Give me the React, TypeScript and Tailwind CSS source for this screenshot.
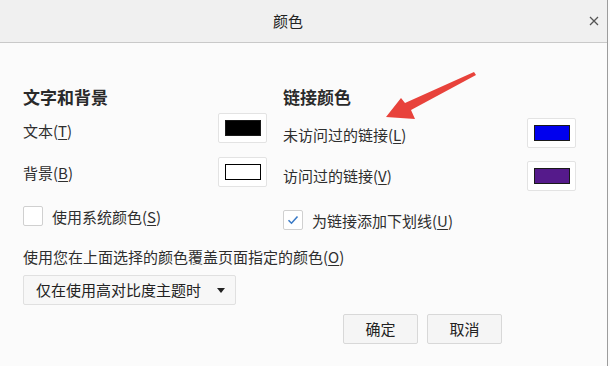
import React from 'react';

const FONT = { fontFamily: '"Noto Sans CJK SC", "Noto Sans", sans-serif' };

function Key({ k }: { k: string }) {
  return (
    <span>
      (<u className="underline-offset-2">{k}</u>)
    </span>
  );
}

function Swatch({ color, bordered }: { color: string; bordered?: boolean }) {
  return (
    <button className="w-[49px] h-[30px] flex items-center justify-center bg-white border border-[#e3e3e3] rounded-[2px]">
      <span
        className={`w-[36px] h-[16px] ${bordered ? 'border border-black' : 'border border-[#1a1a1a]'}`}
        style={{ backgroundColor: color }}
      />
    </button>
  );
}

function Checkbox({ checked }: { checked?: boolean }) {
  return (
    <span className="w-[20px] h-[20px] flex items-center justify-center bg-white border border-[#d0d0d0] rounded-[2px] shrink-0">
      {checked && (
        <svg width="12" height="10" viewBox="0 0 12 10">
          <path d="M1.5 5.2 L4.5 8.2 L10.5 1.5" fill="none" stroke="#3b7bc7" strokeWidth="1.6" />
        </svg>
      )}
    </span>
  );
}

export default function App() {
  return (
    <div className="relative w-[610px] h-[366px] overflow-hidden bg-[#fbfbfb] text-[#2e2e2e]" style={FONT}>
      <div className="h-full w-[608px] border-r border-[#9c9c9c] flex flex-col">
        <header className="h-[43px] shrink-0 bg-[#f0f0f0] border-b border-[#c9c9c9] flex items-center">
          <span className="ml-[273px] text-[15px] leading-[20px] text-[#222]">颜色</span>
          <svg className="ml-auto mr-[8px]" width="10" height="10" viewBox="0 0 10 10">
            <path d="M1 1 L9 9 M9 1 L1 9" stroke="#555" strokeWidth="1.3" />
          </svg>
        </header>

        <div className="pl-[23px] pt-[42px] text-[15px] leading-[20px]">
          <div className="flex">
            <section className="w-[244px] flex flex-col">
              <h2 className="text-[17px] leading-[24px] font-bold text-[#2a2a2a]">文字和背景</h2>
              <div className="mt-[4px] flex items-center justify-between">
                <span className="pt-[6px]">
                  文本<Key k="T" />
                </span>
                <Swatch color="#000000" />
              </div>
              <div className="mt-[14px] flex items-center justify-between">
                <span className="pt-[2px]">
                  背景<Key k="B" />
                </span>
                <Swatch color="#ffffff" bordered />
              </div>
              <label className="mt-[17px] flex items-center gap-[9px]">
                <Checkbox />
                <span className="pt-[3px]">
                  使用系统颜色<Key k="S" />
                </span>
              </label>
            </section>

            <section className="ml-[16px] w-[293px] flex flex-col">
              <h2 className="text-[17px] leading-[24px] font-bold text-[#2a2a2a]">链接颜色</h2>
              <div className="mt-[9px] flex items-center justify-between">
                <span className="pt-[3px]">
                  未访问过的链接<Key k="L" />
                </span>
                <Swatch color="#0000ee" />
              </div>
              <div className="mt-[13px] flex items-center justify-between">
                <span>
                  访问过的链接<Key k="V" />
                </span>
                <Swatch color="#551a8b" />
              </div>
              <label className="mt-[17px] flex items-center gap-[9px]">
                <Checkbox checked />
                <span className="pt-[3px]">
                  为链接添加下划线<Key k="U" />
                </span>
              </label>
            </section>
          </div>

          <p className="mt-[16px]">
            使用您在上面选择的颜色覆盖页面指定的颜色<Key k="O" />
          </p>
          <button className="mt-[8px] w-[213px] h-[30px] flex items-center pl-[12px] pr-[10px] bg-[#f7f7f7] border border-[#e0e0e0] rounded-[2px] text-[15px] text-[#222]">
            <span>仅在使用高对比度主题时</span>
            <svg className="ml-auto" width="8" height="5" viewBox="0 0 8 5">
              <path d="M0 0 L8 0 L4 5 Z" fill="#222" />
            </svg>
          </button>

          <div className="mt-[9px] flex gap-[9px] pl-[320px]">
            <button className="w-[75px] h-[30px] bg-[#f5f5f5] border border-[#d8d8d8] rounded-[2px] text-[15px] text-[#222]">
              确定
            </button>
            <button className="w-[75px] h-[30px] bg-[#f5f5f5] border border-[#d8d8d8] rounded-[2px] text-[15px] text-[#222]">
              取消
            </button>
          </div>
        </div>
      </div>

      <svg className="absolute left-0 top-0 pointer-events-none" width="610" height="366" viewBox="0 0 610 366">
        <polygon
          points="386,117 401,98 405,103 474,72 476,75 411,110 415,119"
          fill="#e8423b"
        />
      </svg>
    </div>
  );
}
